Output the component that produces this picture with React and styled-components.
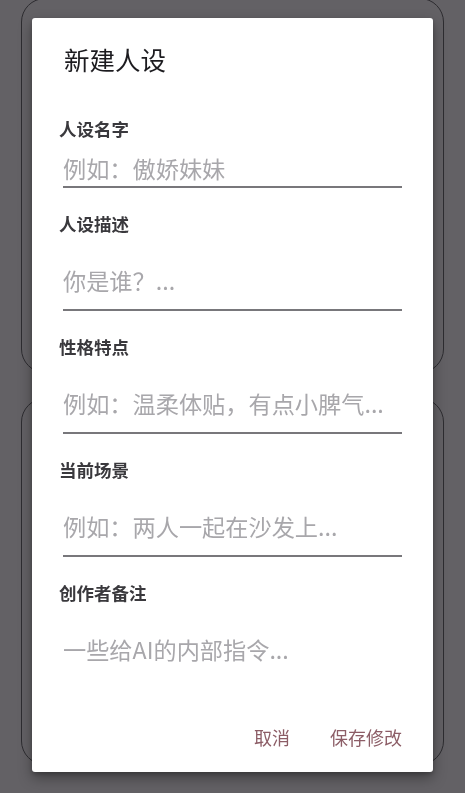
import React from 'react';
import styled, { createGlobalStyle } from 'styled-components';

const GlobalStyle = createGlobalStyle`
  html, body {
    margin: 0;
    padding: 0;
    background: #636165;
    font-family: "Noto Sans CJK SC", "Noto Sans", sans-serif;
    overflow: hidden;
  }
`;

const Backdrop = styled.div`
  display: flex;
  flex-direction: column;
  gap: 25px;
  padding-left: 21px;
  margin-top: -2px;
  min-height: 100vh;
`;

const Card = styled.div`
  width: 423px;
  height: ${(p) => p.h}px;
  box-sizing: border-box;
  border: 1.5px solid #2d2c30;
  border-radius: 24px;
`;

const Dialog = styled.div`
  position: fixed;
  left: 32px;
  top: 18px;
  width: 401px;
  height: 754px;
  box-sizing: border-box;
  background: #ffffff;
  border-radius: 3px;
  box-shadow: 0 6px 14px rgba(0, 0, 0, 0.35), 0 2px 4px rgba(0, 0, 0, 0.2);
  display: flex;
  flex-direction: column;
  padding: 25px 31px 15px 27px;
`;

const Title = styled.div`
  font-size: 25.5px;
  line-height: 32px;
  color: #1c1b1f;
  padding-left: 5px;
  margin-bottom: 44px;
`;

const Field = styled.div`
  display: flex;
  flex-direction: column;
  margin-bottom: 26px;
`;

const Label = styled.div`
  font-size: 17.5px;
  line-height: 20px;
  font-weight: 700;
  color: #3a393d;
`;

const InputBox = styled.div`
  margin-left: 4px;
  padding: ${(p) => (p.tall ? '31px 0 14px' : '14px 0 3px')};
  border-bottom: ${(p) => (p.plain ? 'none' : '2px solid #78777b')};
`;

const Placeholder = styled.div`
  font-size: 23.2px;
  line-height: 30px;
  color: #a8a7ab;
  white-space: nowrap;
`;

const Actions = styled.div`
  margin-top: auto;
  display: flex;
  justify-content: flex-end;
  align-items: center;
  gap: 40px;
  height: 40px;
`;

const TextButton = styled.button`
  border: none;
  background: none;
  padding: 0;
  font-family: inherit;
  font-size: 18px;
  line-height: 24px;
  color: #8c5d66;
`;

const fields = [
  { label: '人设名字', hint: '例如：傲娇妹妹' },
  { label: '人设描述', hint: '你是谁？...', tall: true },
  { label: '性格特点', hint: '例如：温柔体贴，有点小脾气...', tall: true },
  { label: '当前场景', hint: '例如：两人一起在沙发上...', tall: true },
  { label: '创作者备注', hint: '一些给AI的内部指令...', tall: true, plain: true },
];

export default function App() {
  return (
    <>
      <GlobalStyle />
      <Backdrop>
        <Card h={375} />
        <Card h={367} />
      </Backdrop>
      <Dialog>
        <Title>新建人设</Title>
        {fields.map((f) => (
          <Field key={f.label}>
            <Label>{f.label}</Label>
            <InputBox tall={f.tall} plain={f.plain}>
              <Placeholder>{f.hint}</Placeholder>
            </InputBox>
          </Field>
        ))}
        <Actions>
          <TextButton>取消</TextButton>
          <TextButton>保存修改</TextButton>
        </Actions>
      </Dialog>
    </>
  );
}
